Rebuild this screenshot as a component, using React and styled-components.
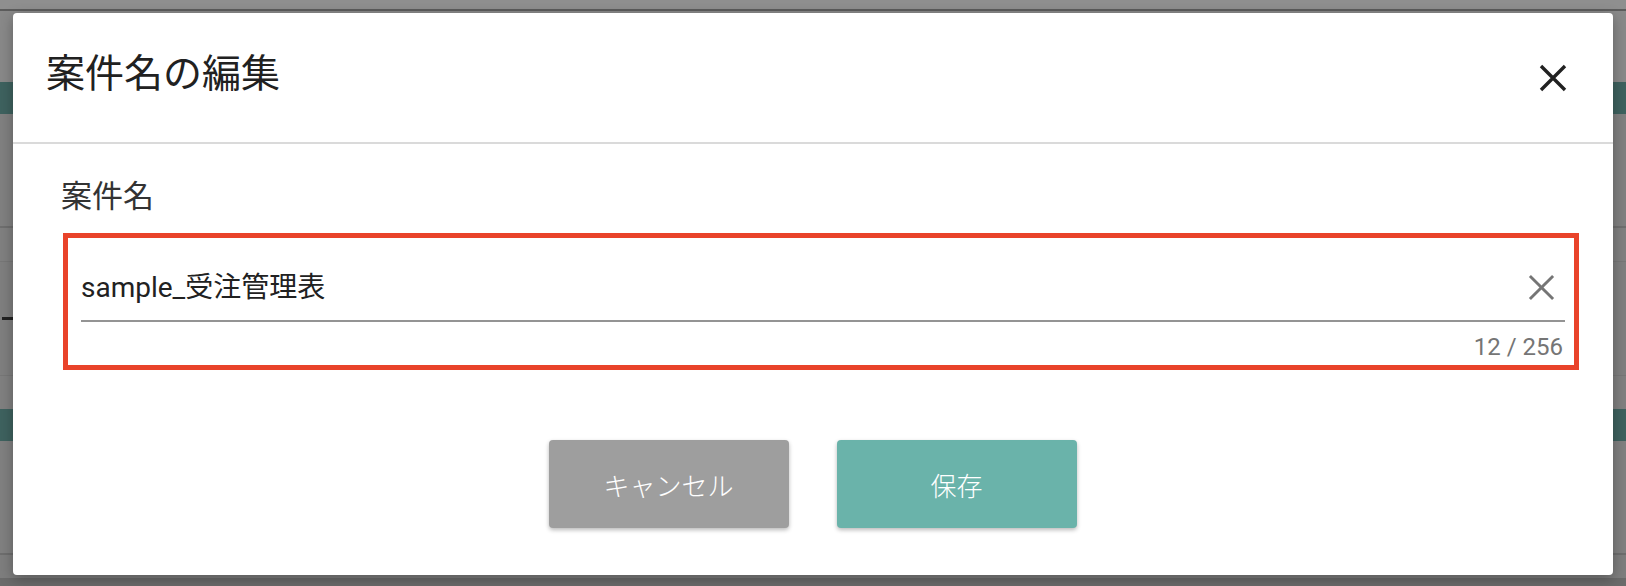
import React from "react";
import styled, { createGlobalStyle } from "styled-components";

const GlobalStyle = createGlobalStyle`
  * {
    box-sizing: border-box;
  }
  html, body {
    margin: 0;
    padding: 0;
    width: 1626px;
    height: 586px;
    overflow: hidden;
    font-family: Roboto, "Noto Sans CJK JP", sans-serif;
    background-color: #808080;
  }
`;

// the dimmed page that sits behind the dialog
const Backdrop = styled.div`
  position: fixed;
  top: 0;
  left: 0;
  right: 0;
  bottom: 0;
  display: flex;
  flex-direction: column;
`;

const Strip = styled.div`
  height: ${(p) => p.$h}px;
  background-color: ${(p) => p.$bg};
  flex-shrink: 0;
  display: flex;
  align-items: center;
`;

const Dash = styled.div`
  width: 11px;
  height: 3px;
  margin-left: 2px;
  background-color: #222;
`;

const Overlay = styled.div`
  position: fixed;
  top: 0;
  left: 0;
  right: 0;
  bottom: 0;
  padding: 13px 13px 0 13px;
`;

const ModalDiv = styled.div`
  width: 1600px;
  background-color: #fff;
  border-radius: 4px;
  box-shadow: 0 4px 14px rgba(0, 0, 0, 0.3);
  display: flex;
  flex-direction: column;
`;

const Header = styled.div`
  height: 131px;
  display: flex;
  align-items: center;
  justify-content: space-between;
  padding: 0 46px 0 33px;
  border-bottom: 2px solid #dadada;
`;

const Title = styled.h2`
  margin: 0 0 8px 0;
  font-size: 39px;
  line-height: 48px;
  font-weight: 400;
  color: #212121;
`;

const IconButton = styled.button`
  border: 0;
  padding: 0;
  background: none;
  display: flex;
  cursor: pointer;
  color: ${(p) => p.$color};
  margin-right: ${(p) => p.$mr || 0}px;
`;

const Body = styled.div`
  padding: 33px 34px 47px 48px;
  display: flex;
  flex-direction: column;
`;

const Label = styled.div`
  font-size: 31px;
  line-height: 40px;
  color: #333;
`;

const Frame = styled.div`
  margin: 16px 0 0 2px;
  border: 5px solid #e9432a;
  padding: 20px 9px 4px 13px;
`;

const InputRow = styled.div`
  height: 64px;
  display: flex;
  align-items: center;
  padding-bottom: 3px;
  border-bottom: 2px solid #949494;
`;

const Input = styled.input`
  flex: 1;
  border: 0;
  outline: none;
  padding: 0;
  font-family: Roboto, "Noto Sans CJK JP", sans-serif;
  font-size: 28px;
  line-height: 40px;
  color: #212121;
  background: transparent;
`;

const Counter = styled.div`
  margin-top: 11px;
  text-align: right;
  font-size: 24px;
  line-height: 28px;
  color: #757575;
  padding-right: 2px;
`;

const Actions = styled.div`
  margin-top: 70px;
  display: flex;
  justify-content: center;
  gap: 48px;
  margin-right: 15px;
`;

const Button = styled.button`
  width: 240px;
  height: 88px;
  border: 0;
  border-radius: 4px;
  background-color: ${(p) => p.$bg};
  color: #fff;
  font-family: Roboto, "Noto Sans CJK JP", sans-serif;
  font-size: 26px;
  font-weight: 300;
  box-shadow: 0 2px 4px rgba(0, 0, 0, 0.28);
  cursor: pointer;
`;

const CrossIcon = ({ size, stroke }) => (
  <svg width={size} height={size} viewBox="0 0 28 28" fill="none">
    <path d="M2 2L26 26M26 2L2 26" stroke="currentColor" strokeWidth={stroke} />
  </svg>
);

const backdropStrips = [
  { h: 9, bg: "#8f8f8f" },
  { h: 2, bg: "#5c5c5c" },
  { h: 71, bg: "#898989" },
  { h: 32, bg: "#3e625f" },
  { h: 112, bg: "#818181" },
  { h: 2, bg: "#6f6f6f" },
  { h: 33, bg: "#808080" },
  { h: 1, bg: "#777" },
  { h: 113, bg: "#7f7f7f", dash: true },
  { h: 1, bg: "#777" },
  { h: 33, bg: "#808080" },
  { h: 32, bg: "#3e625f" },
  { h: 112, bg: "#818181" },
  { h: 2, bg: "#6e6e6e" },
  { h: 23, bg: "#7e7e7e" },
  { h: 20, bg: "#6b6b6b" },
];

const App = () => {
  return (
    <>
      <GlobalStyle />
      <Backdrop>
        {backdropStrips.map((s, i) => (
          <Strip key={i} $h={s.h} $bg={s.bg}>
            {s.dash && <Dash />}
          </Strip>
        ))}
      </Backdrop>
      <Overlay>
        <ModalDiv>
          <Header>
            <Title>案件名の編集</Title>
            <IconButton $color="#212121">
              <CrossIcon size={28} stroke={3.4} />
            </IconButton>
          </Header>
          <Body>
            <Label>案件名</Label>
            <Frame>
              <InputRow>
                <Input defaultValue="sample_受注管理表" />
                <IconButton $color="#757575" $mr={10}>
                  <CrossIcon size={27} stroke={3} />
                </IconButton>
              </InputRow>
              <Counter>12 / 256</Counter>
            </Frame>
            <Actions>
              <Button $bg="#9e9e9e">キャンセル</Button>
              <Button $bg="#6ab3aa">保存</Button>
            </Actions>
          </Body>
        </ModalDiv>
      </Overlay>
    </>
  );
};

export default App;
